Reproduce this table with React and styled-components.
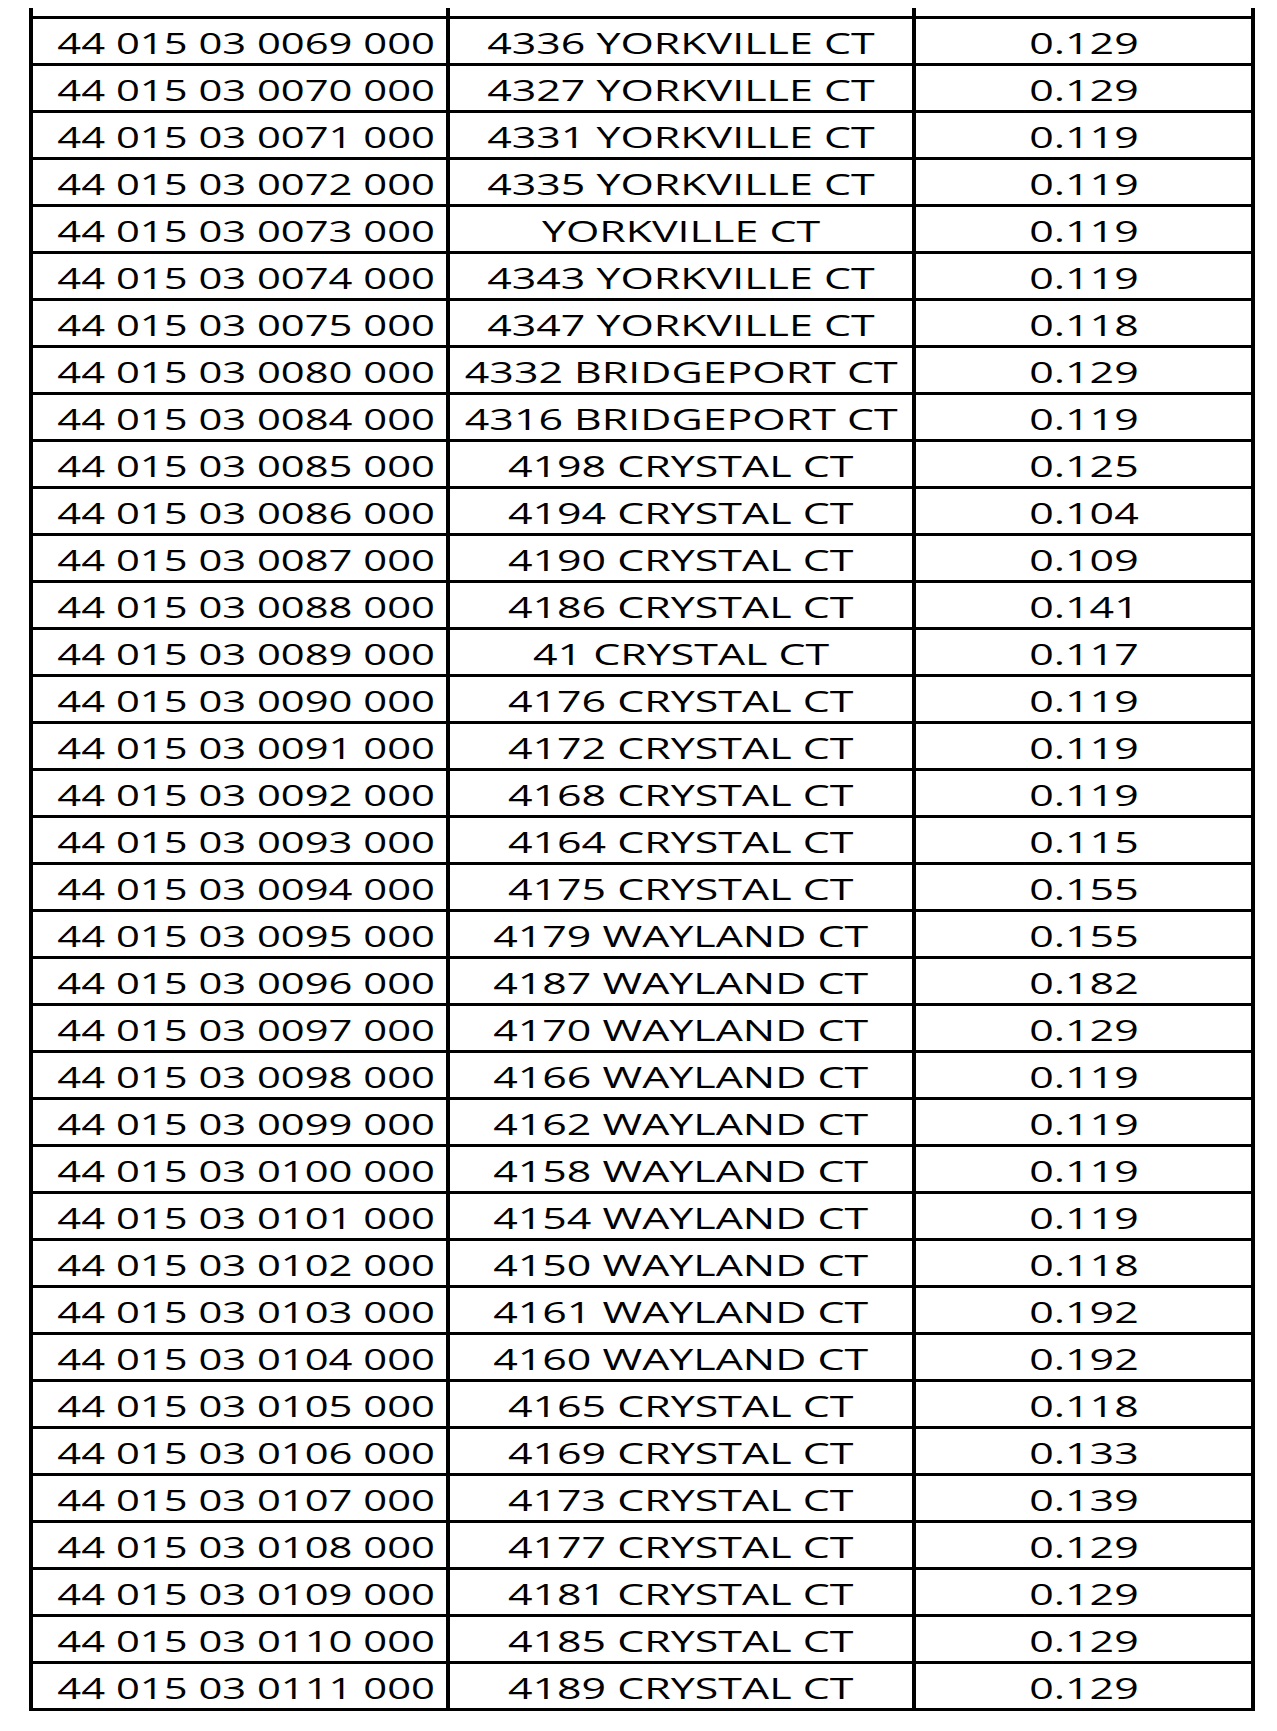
import React from 'react';
import styled, { createGlobalStyle } from 'styled-components';

const rows = [
  ['0069', '4336 YORKVILLE CT', '0.129'],
  ['0070', '4327 YORKVILLE CT', '0.129'],
  ['0071', '4331 YORKVILLE CT', '0.119'],
  ['0072', '4335 YORKVILLE CT', '0.119'],
  ['0073', 'YORKVILLE CT', '0.119'],
  ['0074', '4343 YORKVILLE CT', '0.119'],
  ['0075', '4347 YORKVILLE CT', '0.118'],
  ['0080', '4332 BRIDGEPORT CT', '0.129'],
  ['0084', '4316 BRIDGEPORT CT', '0.119'],
  ['0085', '4198 CRYSTAL CT', '0.125'],
  ['0086', '4194 CRYSTAL CT', '0.104'],
  ['0087', '4190 CRYSTAL CT', '0.109'],
  ['0088', '4186 CRYSTAL CT', '0.141'],
  ['0089', '41 CRYSTAL CT', '0.117'],
  ['0090', '4176 CRYSTAL CT', '0.119'],
  ['0091', '4172 CRYSTAL CT', '0.119'],
  ['0092', '4168 CRYSTAL CT', '0.119'],
  ['0093', '4164 CRYSTAL CT', '0.115'],
  ['0094', '4175 CRYSTAL CT', '0.155'],
  ['0095', '4179 WAYLAND CT', '0.155'],
  ['0096', '4187 WAYLAND CT', '0.182'],
  ['0097', '4170 WAYLAND CT', '0.129'],
  ['0098', '4166 WAYLAND CT', '0.119'],
  ['0099', '4162 WAYLAND CT', '0.119'],
  ['0100', '4158 WAYLAND CT', '0.119'],
  ['0101', '4154 WAYLAND CT', '0.119'],
  ['0102', '4150 WAYLAND CT', '0.118'],
  ['0103', '4161 WAYLAND CT', '0.192'],
  ['0104', '4160 WAYLAND CT', '0.192'],
  ['0105', '4165 CRYSTAL CT', '0.118'],
  ['0106', '4169 CRYSTAL CT', '0.133'],
  ['0107', '4173 CRYSTAL CT', '0.139'],
  ['0108', '4177 CRYSTAL CT', '0.129'],
  ['0109', '4181 CRYSTAL CT', '0.129'],
  ['0110', '4185 CRYSTAL CT', '0.129'],
  ['0111', '4189 CRYSTAL CT', '0.129'],
];

const GlobalStyle = createGlobalStyle`
  html, body {
    margin: 0;
    background: #fff;
  }
  body {
    font-family: "Open Sans", "Noto Sans", sans-serif;
    color: #000;
  }
`;

const Page = styled.div`
  padding: 8px 0 0 29px;
  width: 1277px;
  height: 1731px;
  box-sizing: border-box;
`;

const Table = styled.div`
  display: grid;
  grid-template-columns: 417px 466px 343px;
`;

// the rules run on above the first row (continued from the previous page)
const Stub = styled.div`
  height: 8px;
  box-sizing: border-box;
  border-left: 4px solid #000;
  border-right: ${(p) => (p.$last ? '4px solid #000' : 'none')};
`;

const Cell = styled.div`
  height: ${(p) => (p.$bottom ? 50 : 47)}px;
  box-sizing: border-box;
  border-left: 4px solid #000;
  border-top: 3px solid #000;
  border-right: ${(p) => (p.$last ? '4px solid #000' : 'none')};
  border-bottom: ${(p) => (p.$bottom ? '3px solid #000' : 'none')};
  display: flex;
  align-items: center;
  justify-content: center;
  padding-top: 3px;
  padding-left: ${(p) => p.$shift || 0}px;
`;

const Text = styled.span`
  display: inline-block;
  font-size: 29px;
  font-weight: 500;
  line-height: 1;
  white-space: nowrap;
  transform: scaleX(${(p) => p.$sx});
  transform-origin: center;
`;

export default function App() {
  const lastIndex = rows.length - 1;
  return (
    <>
      <GlobalStyle />
      <Page>
        <Table>
          <Stub />
          <Stub />
          <Stub $last />
          {rows.map(([parcel, address, acres], i) => (
            <React.Fragment key={parcel}>
              <Cell $bottom={i === lastIndex} $shift={14}>
                <Text $sx={1.44}>{`44 015 03 ${parcel} 000`}</Text>
              </Cell>
              <Cell $bottom={i === lastIndex}>
                <Text $sx={1.48}>{address}</Text>
              </Cell>
              <Cell $bottom={i === lastIndex} $last>
                <Text $sx={1.48}>{acres}</Text>
              </Cell>
            </React.Fragment>
          ))}
        </Table>
      </Page>
    </>
  );
}
